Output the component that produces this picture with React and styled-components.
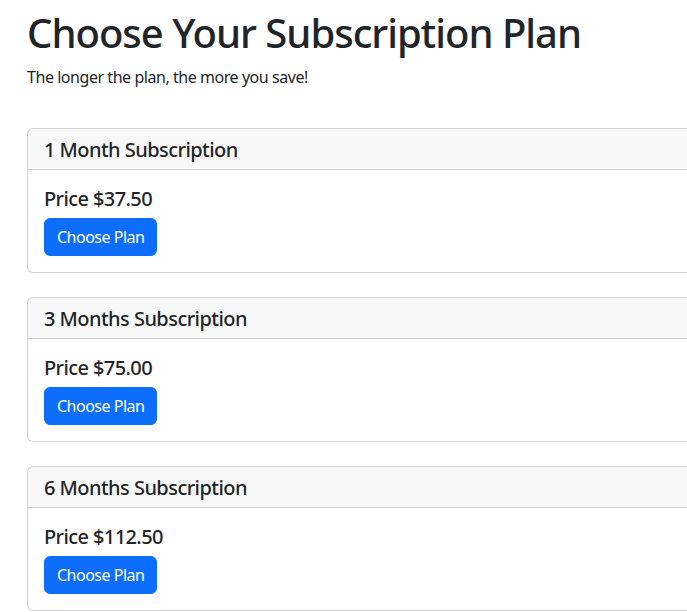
import React from "react";
import styled, { createGlobalStyle } from "styled-components";

const plans = [
  { months: "1 Month", price: "37.50" },
  { months: "3 Months", price: "75.00" },
  { months: "6 Months", price: "112.50" },
];

const GlobalStyle = createGlobalStyle`
  html, body {
    margin: 0;
    overflow-x: hidden;
  }
  body {
    font-family: "Noto Sans", "Open Sans", sans-serif;
    color: #212529;
    background: #fff;
  }
`;

const App = () => {
  return (
    <>
      <GlobalStyle />
      <Wrapper>
        <Title>Choose Your Subscription Plan</Title>
        <Lead>The longer the plan, the more you save!</Lead>
        <PlanList>
          {plans.map((plan) => (
            <Card key={plan.months}>
              <CardHeader>{plan.months} Subscription</CardHeader>
              <CardBody>
                <Price>Price ${plan.price}</Price>
                <Button type="button">Choose Plan</Button>
              </CardBody>
            </Card>
          ))}
        </PlanList>
      </Wrapper>
    </>
  );
};

const Wrapper = styled.div`
  padding: 9px 0 0 27px;
`;

const Title = styled.h1`
  font-size: 40px;
  font-weight: 500;
  line-height: 1.2;
  letter-spacing: -1px;
  margin: 0 0 8px;
  white-space: nowrap;
`;

const Lead = styled.p`
  font-size: 16px;
  line-height: 1.5;
  letter-spacing: -0.45px;
  margin: 0 0 39px;
`;

const PlanList = styled.div`
  display: flex;
  flex-direction: column;
  gap: 24px;
`;

const Card = styled.div`
  width: 720px;
  border: 1px solid rgba(0, 0, 0, 0.175);
  border-radius: 6px;
  background: #fff;
  overflow: hidden;
`;

const CardHeader = styled.h5`
  margin: 0;
  padding: 9px 16px 7px;
  font-size: 20px;
  font-weight: 500;
  line-height: 24px;
  letter-spacing: -0.55px;
  background: rgba(33, 37, 41, 0.03);
  border-bottom: 1px solid rgba(0, 0, 0, 0.175);
`;

const CardBody = styled.div`
  padding: 16px;
`;

const Price = styled.h5`
  margin: 1px 0 7px;
  font-size: 20px;
  font-weight: 500;
  line-height: 24px;
  letter-spacing: -0.6px;
`;

const Button = styled.button`
  font-family: inherit;
  font-size: 16px;
  line-height: 24px;
  letter-spacing: -0.5px;
  color: #fff;
  background: #0d6efd;
  border: 1px solid #0d6efd;
  border-radius: 6px;
  padding: 6px 12px;
  cursor: pointer;
`;

export default App;
